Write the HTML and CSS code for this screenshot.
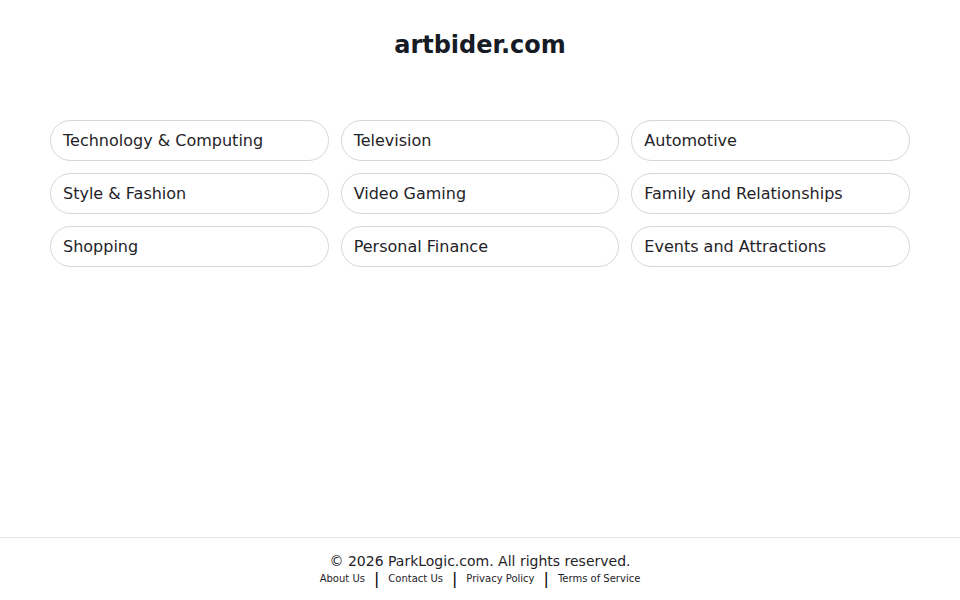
FILE: index.html
```html
<!DOCTYPE html>
<html lang="en">
<head>
    <meta charset="UTF-8">
    <meta name="viewport" content="width=device-width, initial-scale=1.0">
    <title>artbider.com</title>
    <link rel="stylesheet" href="styles.css">
</head>
<body>
    <div class="page">
        <header class="header">
            <h1 class="title">artbider.com</h1>
        </header>

        <main class="main">
            <div class="topics">
                <a class="topic" href="#">Technology &amp; Computing</a>
                <a class="topic" href="#">Television</a>
                <a class="topic" href="#">Automotive</a>
                <a class="topic" href="#">Style &amp; Fashion</a>
                <a class="topic" href="#">Video Gaming</a>
                <a class="topic" href="#">Family and Relationships</a>
                <a class="topic" href="#">Shopping</a>
                <a class="topic" href="#">Personal Finance</a>
                <a class="topic" href="#">Events and Attractions</a>
            </div>
        </main>

        <!-- Footer -->
        <footer class="footer">
            <div class="copyright">© 2026 ParkLogic.com. All rights reserved.</div>
            <div class="footer-links">
                <a href="#">About Us</a>
                <span class="sep">|</span>
                <a href="#">Contact Us</a>
                <span class="sep">|</span>
                <a href="#">Privacy Policy</a>
                <span class="sep">|</span>
                <a href="#">Terms of Service</a>
            </div>
        </footer>
    </div>
</body>
</html>
```

FILE: styles.css
```css
html, body {
    margin: 0;
    padding: 0;
    background: #fff;
    font-family: "DejaVu Sans", sans-serif;
    color: #1f2328;
}

.page {
    min-height: 100vh;
    display: flex;
    flex-direction: column;
}

.header {
    padding-top: 30px;
    text-align: center;
}

.title {
    margin: 0;
    font-size: 24px;
    line-height: 30px;
    font-weight: bold;
    color: #161b26;
}

.main {
    flex: 1;
    padding: 60px 50px 0;
}

.topics {
    display: grid;
    grid-template-columns: repeat(3, 1fr);
    column-gap: 12px;
    row-gap: 12px;
}

.topic {
    display: flex;
    align-items: center;
    height: 39px;
    padding: 0 12px;
    border: 1px solid #d6d6d6;
    border-radius: 21px;
    font-size: 16px;
    color: #1f2328;
    text-decoration: none;
}

.topic:hover {
    background-color: #f6f6f6;
}

.footer {
    border-top: 1px solid #e5e5e5;
    padding: 15px 0 13px;
    text-align: center;
}

.copyright {
    font-size: 14px;
    line-height: 17px;
    color: #1f2328;
}

.footer-links {
    display: flex;
    justify-content: center;
    align-items: center;
    gap: 9px;
    margin-top: 1px;
    font-size: 10px;
    line-height: 16px;
}

.footer-links a {
    color: #1f2328;
    text-decoration: none;
}

.sep {
    font-size: 16px;
    line-height: 16px;
    color: #000;
}
```
